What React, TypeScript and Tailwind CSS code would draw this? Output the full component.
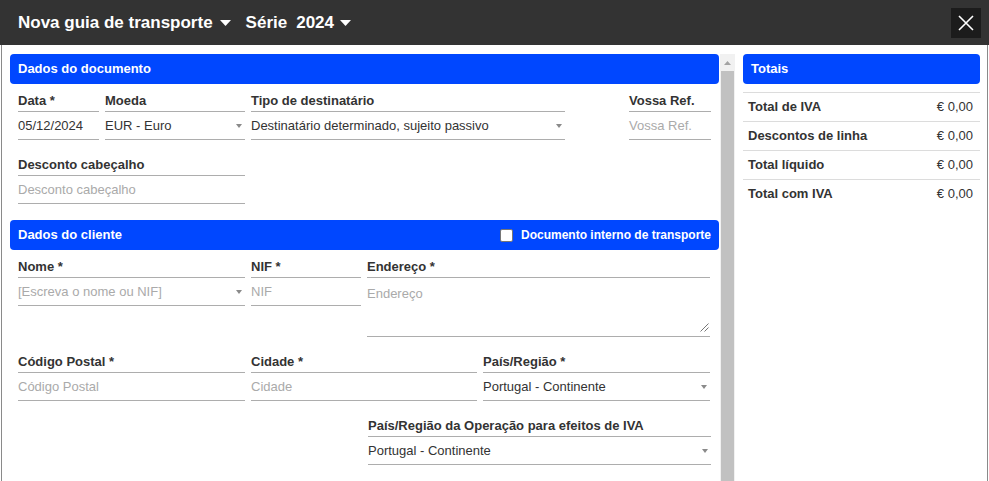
import React from 'react';

const Caret = () => (
  <svg width="6" height="4" viewBox="0 0 6 4" className="mr-[3px] shrink-0">
    <path d="M0 0h6L3 4z" fill="#8a8a8a" />
  </svg>
);

const TitleCaret = ({ className }: { className: string }) => (
  <svg width="11" height="6" viewBox="0 0 11 6" className={className}>
    <path d="M0 0h11L5.5 6z" fill="#fff" />
  </svg>
);

type FieldProps = {
  label: string;
  value?: string;
  placeholder?: string;
  select?: boolean;
  textarea?: boolean;
  w: string;
};

function Field({ label, value, placeholder, select, textarea, w }: FieldProps) {
  return (
    <div className={w}>
      <div className="h-[21px] border-b border-[#adadad] text-[13px] font-bold leading-[20px] text-[#333]">
        {label}
      </div>
      {textarea ? (
        <div className="relative h-[59px] border-b border-[#adadad] pt-[8px] text-[13px] leading-[16px] text-[#aaa]">
          {placeholder}
          <svg width="9" height="9" viewBox="0 0 9 9" className="absolute right-[1px] bottom-[4px]">
            <path d="M8.5 0.5L0.5 8.5M8.5 4.5L4.5 8.5" stroke="#777" strokeWidth="1" />
          </svg>
        </div>
      ) : (
        <div className="flex h-[28px] items-center justify-between border-b border-[#adadad] text-[13px]">
          <span className={value ? 'text-[#333]' : 'text-[#aaa]'}>{value ?? placeholder}</span>
          {select && <Caret />}
        </div>
      )}
    </div>
  );
}

function SectionHeader({ title, children }: { title: string; children?: React.ReactNode }) {
  return (
    <div className="flex h-[30px] items-center justify-between rounded-[4px] bg-[#0047ff] px-2 text-[13px] font-bold text-white">
      <span>{title}</span>
      {children}
    </div>
  );
}

const totals = [
  { label: 'Total de IVA', value: '€ 0,00' },
  { label: 'Descontos de linha', value: '€ 0,00' },
  { label: 'Total líquido', value: '€ 0,00' },
  { label: 'Total com IVA', value: '€ 0,00' },
];

export default function App() {
  return (
    <div className="h-[481px] w-[989px] overflow-hidden bg-white font-['Liberation_Sans',Arial,sans-serif]">
      {/* top bar */}
      <div className="flex h-[45px] items-center justify-between bg-[#333] pl-[18px] pr-[8px] text-white">
        <div className="flex items-center text-[17px] font-bold">
          <span>Nova guia de transporte</span>
          <TitleCaret className="ml-[7px] mt-[1px]" />
          <span className="ml-[15px]">Série</span>
          <span className="ml-[9px]">2024</span>
          <TitleCaret className="ml-[6px] mt-[1px]" />
        </div>
        <button className="flex h-[30px] w-[30px] items-center justify-center bg-[#1c1c1c]">
          <svg width="16" height="16" viewBox="0 0 16 16">
            <path d="M1 1L15 15M15 1L1 15" stroke="#fff" strokeWidth="1.6" />
          </svg>
        </button>
      </div>

      <div className="ml-px flex h-[436px] w-[987px] border-x border-[#8a8a8a] pl-[8px] pr-[7px] pt-[9px]">
        {/* left form */}
        <div className="w-[709px] shrink-0">
          <SectionHeader title="Dados do documento" />
          <div className="px-2 pb-[16px] pt-[7px]">
            <div className="flex items-start gap-[6px]">
              <Field w="w-[81px]" label="Data *" value="05/12/2024" />
              <Field w="w-[140px]" label="Moeda" value="EUR - Euro" select />
              <Field w="w-[314px]" label="Tipo de destinatário" value="Destinatário determinado, sujeito passivo" select />
              <div className="ml-auto w-[82px]">
                <Field w="w-[82px]" label="Vossa Ref." placeholder="Vossa Ref." />
              </div>
            </div>
            <div className="mt-[15px] flex">
              <Field w="w-[227px]" label="Desconto cabeçalho" placeholder="Desconto cabeçalho" />
            </div>
          </div>

          <SectionHeader title="Dados do cliente">
            <label className="flex items-center text-[12px]">
              <span className="h-[13px] w-[13px] rounded-[2px] border border-[#767676] bg-white" />
              <span className="ml-[8px]">Documento interno de transporte</span>
            </label>
          </SectionHeader>
          <div className="px-2 pt-[7px]">
            <div className="flex items-start gap-[6px]">
              <Field w="w-[227px]" label="Nome *" placeholder="[Escreva o nome ou NIF]" select />
              <Field w="w-[110px]" label="NIF *" placeholder="NIF" />
              <Field w="w-[343px]" label="Endereço *" placeholder="Endereço" textarea />
            </div>
            <div className="mt-[15px] flex items-start gap-[6px]">
              <Field w="w-[227px]" label="Código Postal *" placeholder="Código Postal" />
              <Field w="w-[226px]" label="Cidade *" placeholder="Cidade" />
              <Field w="w-[227px]" label="País/Região *" value="Portugal - Continente" select />
            </div>
            <div className="mt-[15px] flex justify-end">
              <Field w="w-[343px]" label="País/Região da Operação para efeitos de IVA" value="Portugal - Continente" select />
            </div>
          </div>
        </div>

        {/* scrollbar */}
        <div className="ml-px flex w-[15px] shrink-0 flex-col bg-[#f1f1f1]">
          <div className="flex h-[17px] items-center justify-center">
            <svg width="7" height="4" viewBox="0 0 7 4">
              <path d="M0 4h7L3.5 0z" fill="#a3a3a3" />
            </svg>
          </div>
          <div className="mx-px flex-1 bg-[#c1c1c1]" />
        </div>

        {/* totals */}
        <div className="ml-[8px] w-[237px] shrink-0">
          <SectionHeader title="Totais" />
          <div className="mt-[8px]">
            {totals.map((t) => (
              <div
                key={t.label}
                className="flex h-[29px] items-center justify-between border-t border-[#dcdcdc] pl-[5px] pr-[7px] text-[13px] text-[#333]"
              >
                <span className="font-bold">{t.label}</span>
                <span>{t.value}</span>
              </div>
            ))}
          </div>
        </div>
      </div>
    </div>
  );
}
